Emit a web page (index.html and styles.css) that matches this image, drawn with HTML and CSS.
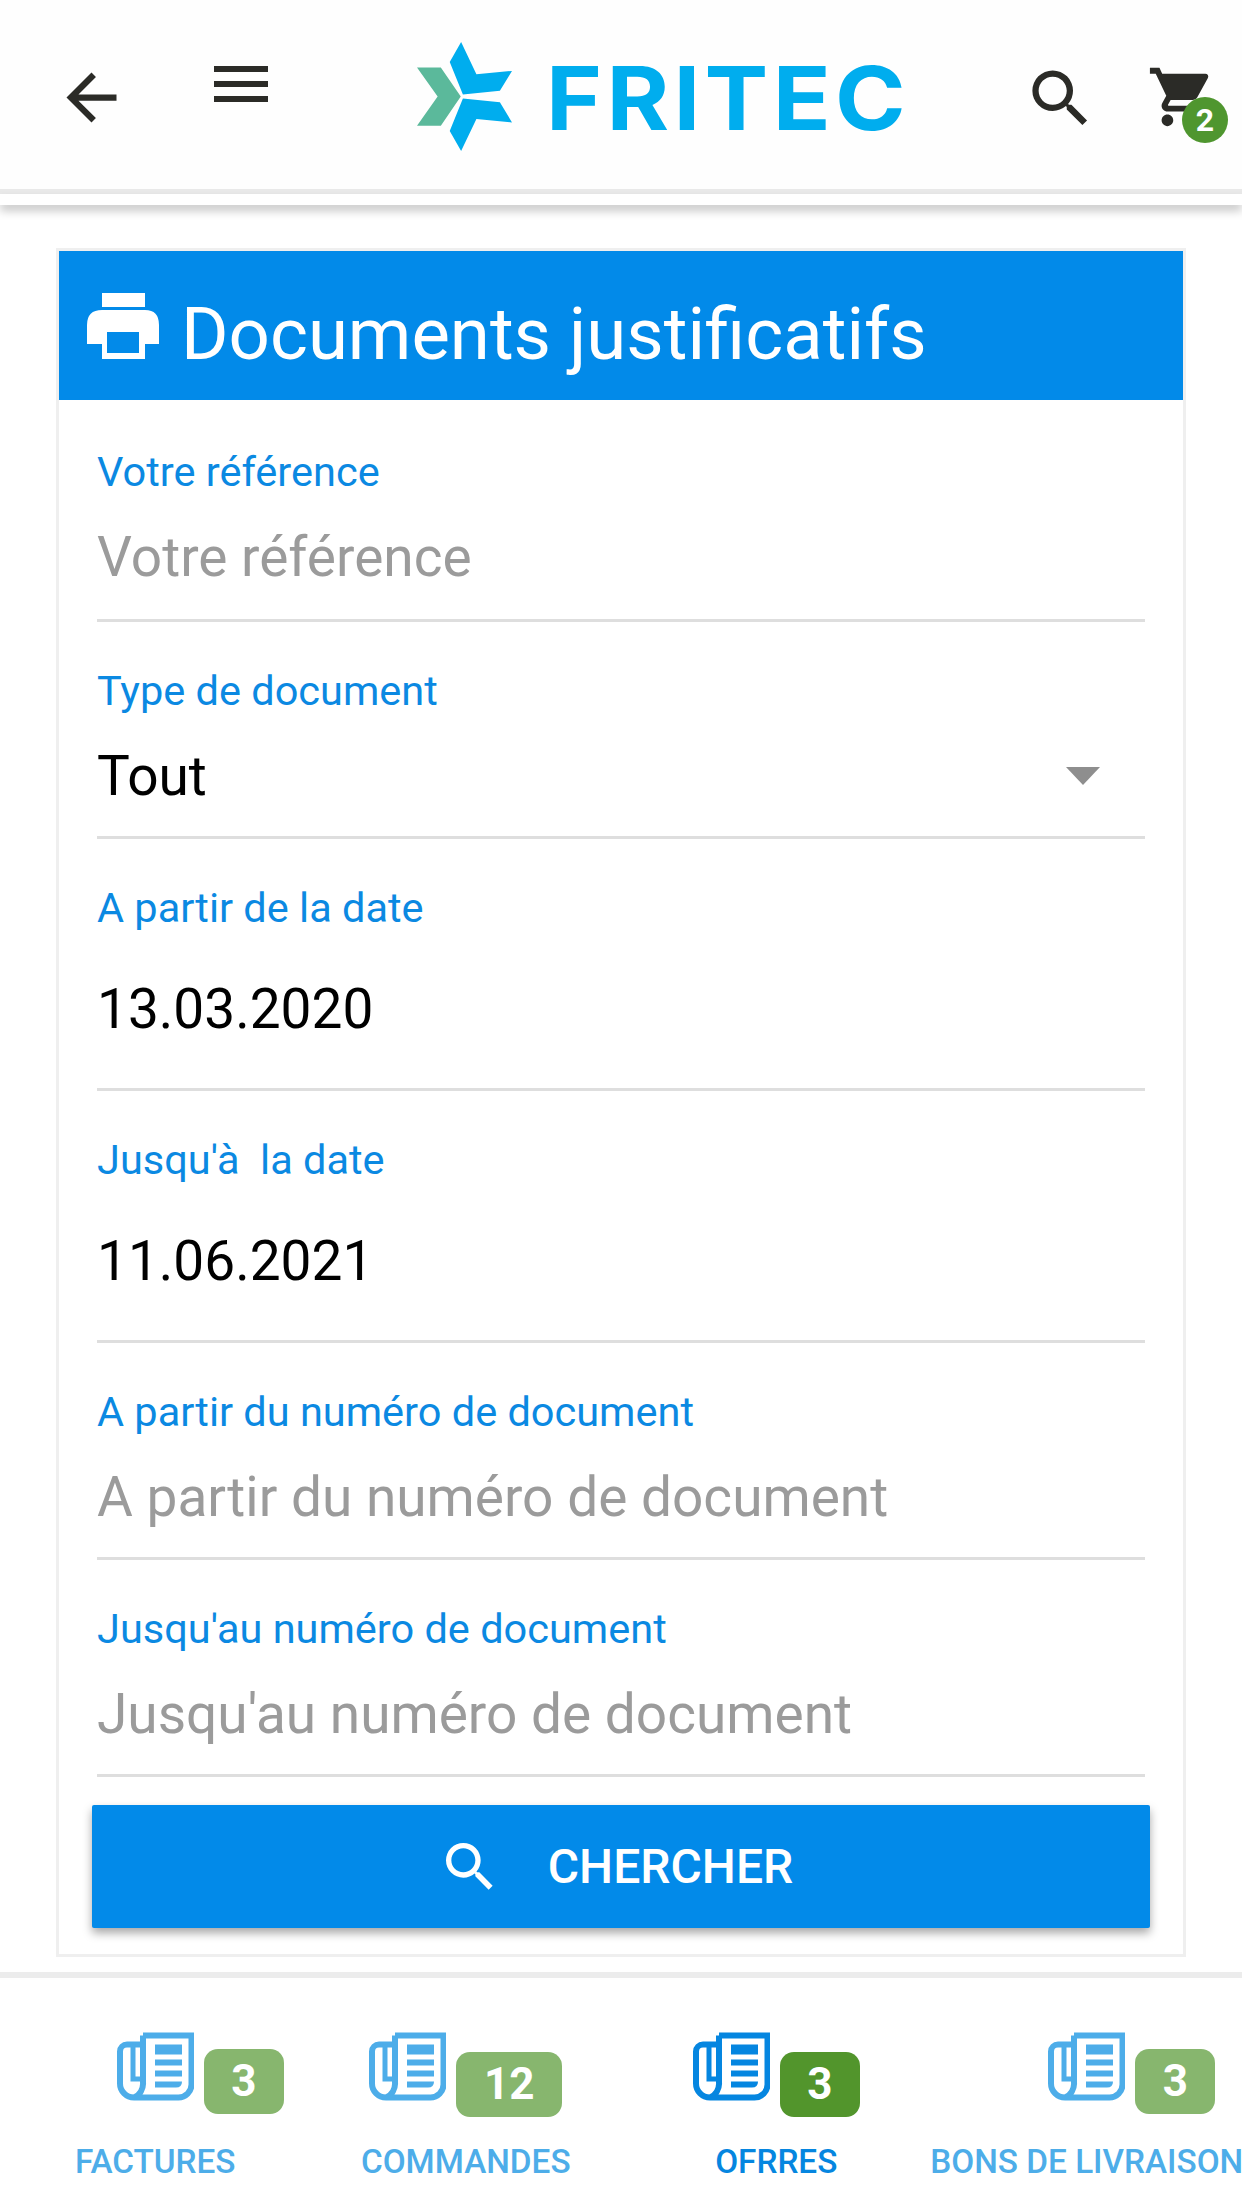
FILE: index.html
```html
<!DOCTYPE html>
<html lang="fr">
<head>
    <meta charset="UTF-8">
    <meta name="viewport" content="width=device-width, initial-scale=1.0">
    <title>Documents justificatifs</title>
    <link rel="stylesheet" href="styles.css">
</head>
<body>
    <svg class="sprites" width="0" height="0">
        <symbol id="news" viewBox="0 0 77 68">
            <path d="M26 3H74.500V52a13 13 0 0 1-13 13H17A14 14 0 0 1 3 51V19a7 7 0 0 1 7-7H26M26 3V50A15 15 0 0 1 17 65" fill="none" stroke="currentColor" stroke-width="6"/>
            <path d="M13.500 12H18.500V44H26V49H13.500Z" fill="currentColor"/>
            <rect x="38" y="12" width="27" height="10" fill="currentColor"/>
            <rect x="38" y="27" width="27" height="6" fill="currentColor"/>
            <rect x="38" y="38" width="27" height="6" fill="currentColor"/>
            <path d="M38 49H65Q65 55 59 55H38Z" fill="currentColor"/>
        </symbol>
    </svg>

    <!-- top bar -->
    <header class="topbar">
        <svg class="back" viewBox="0 0 24 24"><path d="M20 11H7.830l5.590-5.590L12 4l-8 8 8 8 1.410-1.410L7.830 13H20v-2z"/></svg>
        <svg class="menu" viewBox="0 0 24 24"><path d="M3 18h18v-2H3v2zm0-5h18v-2H3v2zm0-7v2h18V6H3z"/></svg>
        <div class="logo">
            <svg class="logo-star" viewBox="105 68 267 328" preserveAspectRatio="none">
                <polygon fill="#5bb99b" points="105,145 172,145 228,232 172,320 105,320 163,232"/>
                <polygon fill="#00adee" points="229,68 272,165 372,155 338,215 234,226 197,128"/>
                <polygon fill="#00adee" points="234,238 338,249 372,310 272,300 229,396 197,336"/>
            </svg>
            <span class="logo-text">FRITEC</span>
        </div>
        <svg class="search" viewBox="0 0 24 24"><path d="M15.500 14h-.79l-.28-.27A6.470 6.470 0 0 0 16 9.500 6.500 6.500 0 1 0 9.500 16c1.610 0 3.090-.59 4.230-1.570l.27.28v.79l5 4.990L20.490 19l-4.990-5zm-6 0C7.010 14 5 11.990 5 9.500S7.010 5 9.500 5 14 7.010 14 9.500 11.990 14 9.500 14z"/></svg>
        <div class="cart">
            <svg viewBox="0 0 24 24"><path d="M7 18c-1.100 0-1.990.9-1.990 2S5.900 22 7 22s2-.9 2-2-.9-2-2-2zM1 2v2h2l3.600 7.590-1.350 2.450c-.16.28-.25.61-.25.96 0 1.100.9 2 2 2h12v-2H7.420c-.14 0-.25-.11-.25-.25l.03-.12.9-1.630h7.450c.75 0 1.410-.41 1.750-1.030l3.580-6.490A1 1 0 0 0 20 4H5.210l-.94-2H1zm16 16c-1.100 0-1.990.9-1.990 2s.89 2 1.990 2 2-.9 2-2-.9-2-2-2z"/></svg>
            <span class="cart-count">2</span>
        </div>
    </header>
    <div class="topbar-rest"></div>

    <main class="card">
        <h1 class="card-title">
            <svg class="print" viewBox="0 0 72 66"><path fill-rule="evenodd" d="M15 0H58V14H15ZM0 51V32Q0 17 15 17H58Q72 17 72 32V51H58V66H15V51ZM20 39V60H52V39Z"/></svg>
            Documents justificatifs
        </h1>

        <form class="form">
            <div class="field">
                <label>Votre référence</label>
                <div class="value empty">Votre référence</div>
            </div>
            <div class="field">
                <label>Type de document</label>
                <div class="value select">Tout<span class="caret"></span></div>
            </div>
            <div class="field date">
                <label>A partir de la date</label>
                <div class="value">13.03.2020</div>
            </div>
            <div class="field date">
                <label>Jusqu'à&nbsp; la date</label>
                <div class="value">11.06.2021</div>
            </div>
            <div class="field">
                <label>A partir du numéro de document</label>
                <div class="value empty">A partir du numéro de document</div>
            </div>
            <div class="field">
                <label>Jusqu'au numéro de document</label>
                <div class="value empty">Jusqu'au numéro de document</div>
            </div>
            <button class="submit" type="button">
                <svg viewBox="0 0 24 24"><path d="M15.500 14h-.79l-.28-.27A6.470 6.470 0 0 0 16 9.500 6.500 6.500 0 1 0 9.500 16c1.610 0 3.090-.59 4.230-1.570l.27.28v.79l5 4.990L20.490 19l-4.990-5zm-6 0C7.010 14 5 11.990 5 9.500S7.010 5 9.500 5 14 7.010 14 9.500 11.990 14 9.500 14z"/></svg>
                CHERCHER
            </button>
        </form>
    </main>

    <!-- bottom tabs -->
    <nav class="tabs">
        <div class="tab loose">
            <div class="tab-top"><svg class="news"><use href="#news"/></svg><span class="count">3</span></div>
            <div class="tab-name">FACTURES</div>
        </div>
        <div class="tab">
            <div class="tab-top"><svg class="news"><use href="#news"/></svg><span class="count wide">12</span></div>
            <div class="tab-name">COMMANDES</div>
        </div>
        <div class="tab active">
            <div class="tab-top"><svg class="news"><use href="#news"/></svg><span class="count">3</span></div>
            <div class="tab-name">OFRRES</div>
        </div>
        <div class="tab loose">
            <div class="tab-top"><svg class="news"><use href="#news"/></svg><span class="count">3</span></div>
            <div class="tab-name">BONS DE LIVRAISON</div>
        </div>
    </nav>
</body>
</html>
```

FILE: styles.css
```css
html, body {
    margin: 0;
    padding: 0;
}
body {
    width: 1242px;
    height: 2208px;
    overflow: hidden;
    background: #fff;
    font-family: Roboto, "Liberation Sans", sans-serif;
    position: relative;
}
.sprites {
    position: absolute;
}

/* top bar */
.topbar {
    height: 189px;
    display: flex;
    align-items: flex-start;
    background: #fefefe;
    border-bottom: 5px solid #e9e9e9;
    color: #2b2b27;
    fill: #2b2b27;
}
.back {
    width: 75px;
    height: 75px;
    margin: 60px 0 0 54px;
}
.menu {
    width: 72px;
    height: 72px;
    margin: 48px 0 0 76px;
}
.logo {
    display: flex;
    align-items: flex-start;
    margin: 42px 0 0 140px;
}
.logo-star {
    width: 95px;
    height: 109px;
}
.logo-text {
    width: 330px;
    margin: 12px 0 0 34px;
    font-family: Inter, sans-serif;
    font-weight: 700;
    font-size: 88px;
    line-height: 88px;
    letter-spacing: 4px;
    color: #00adee;
    transform: scaleX(1.085);
    transform-origin: left;
}
.search {
    width: 75px;
    height: 75px;
    margin: 61px 0 0 auto;
}
.cart {
    position: relative;
    width: 70px;
    height: 70px;
    margin: 62px 25px 0 49px;
}
.cart svg {
    width: 70px;
    height: 70px;
}
.cart-count {
    position: absolute;
    left: 35px;
    top: 35px;
    width: 46px;
    height: 46px;
    border-radius: 50%;
    background: #4f962f;
    color: #fff;
    font-size: 32px;
    font-weight: 700;
    line-height: 46px;
    text-align: center;
}
.topbar-rest {
    height: 11px;
    box-shadow: 0 6px 10px rgba(0, 0, 0, 0.22);
}

/* card with the form */
.card {
    width: 1124px;
    height: 1703px;
    margin: 43px 0 0 56px;
    border: 3px solid #efefef;
}
.card-title {
    height: 149px;
    box-sizing: border-box;
    margin: 0;
    display: flex;
    align-items: center;
    gap: 22px;
    padding: 18px 0 0 28px;
    background: #028ae9;
    color: #fff;
    font-size: 72.500px;
    font-weight: 400;
}
.print {
    width: 72px;
    height: 66px;
    fill: #fff;
    margin-top: -18px;
}
.form {
    padding: 0 38px;
}
.field {
    height: 217px;
    box-sizing: border-box;
    border-bottom: 3px solid #dedede;
    padding-top: 47px;
}
.field:first-child {
    height: 222px;
    padding-top: 50px;
}
.field.date {
    height: 252px;
}
.field label {
    display: block;
    color: #0b89e2;
    font-size: 41.500px;
    line-height: 44px;
}
.value {
    margin-top: 33px;
    font-size: 55px;
    line-height: 60px;
    color: #000;
}
.value.empty {
    color: #9b9b9b;
}
.field.date .value {
    margin-top: 49px;
}
.select {
    display: flex;
    justify-content: space-between;
    align-items: center;
}
.caret {
    width: 0;
    height: 0;
    margin-right: 45px;
    border-left: 17px solid transparent;
    border-right: 17px solid transparent;
    border-top: 18px solid #8e8e8e;
}
.submit {
    display: flex;
    align-items: center;
    justify-content: center;
    gap: 46px;
    width: 1058px;
    height: 123px;
    margin: 28px 0 0 -5px;
    padding: 0 11px 0 0;
    border: none;
    border-radius: 2px;
    background: #028ae9;
    color: #fff;
    font-family: inherit;
    font-size: 48px;
    font-weight: 500;
    box-shadow: 0 5px 10px rgba(0, 0, 0, 0.35);
}
.submit svg {
    width: 64px;
    height: 64px;
    fill: #fff;
}

/* bottom tabs */
.tabs {
    position: absolute;
    left: 0;
    right: 0;
    top: 1972px;
    bottom: 0;
    display: grid;
    grid-template-columns: repeat(4, 310.500px);
    border-top: 6px solid #ececec;
    background: #fff;
}
.tab {
    display: flex;
    flex-direction: column;
    align-items: center;
    color: #4dade9;
    white-space: nowrap;
}
.tab.active {
    color: #0586e0;
}
.tab-top {
    display: flex;
    align-items: flex-start;
    gap: 10px;
    height: 166px;
    padding-top: 54px;
    box-sizing: border-box;
}
.news {
    width: 77px;
    height: 69px;
    color: inherit;
}
.count {
    width: 80px;
    height: 65px;
    margin-top: 20px;
    border-radius: 14px;
    background: #87b66e;
    color: #fff;
    font-size: 44px;
    font-weight: 700;
    line-height: 65px;
    text-align: center;
}
.count.wide {
    width: 106px;
}
.active .count {
    background: #52952c;
}
.loose .count {
    margin-top: 17px;
    margin-right: -90px;
}
.tab-name {
    font-size: 33.300px;
    font-weight: 500;
    line-height: 36px;
}
```
